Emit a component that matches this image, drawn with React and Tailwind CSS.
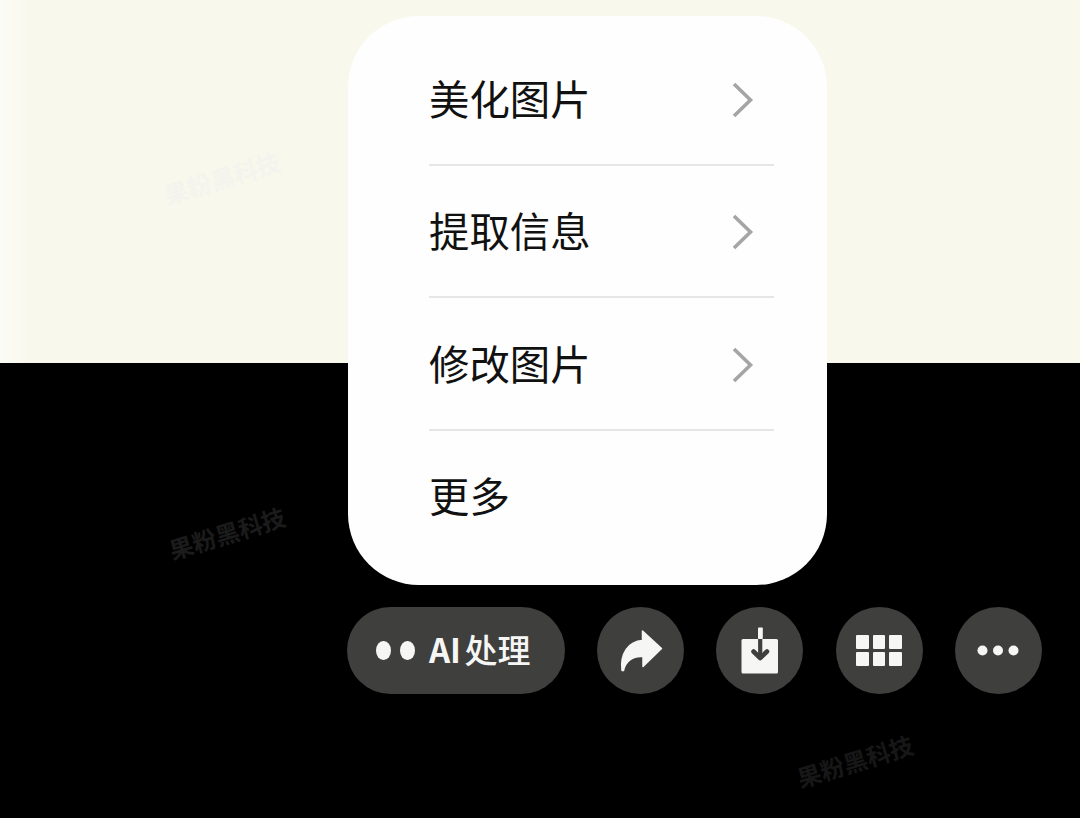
const menuItems = [
  { label: "美化图片", hasSubmenu: true },
  { label: "提取信息", hasSubmenu: true },
  { label: "修改图片", hasSubmenu: true },
  { label: "更多", hasSubmenu: false },
];

function ChevronIcon() {
  return (
    <svg viewBox="0 0 24 38" className="mt-[3px] h-[38px] w-6" fill="none" stroke="#a5a5a5" strokeWidth="3.6" aria-hidden="true">
      <path d="M3 3 L19.5 19 L3 35" />
    </svg>
  );
}

function ShareIcon() {
  return (
    <svg viewBox="0 0 87 87" className="size-full" fill="#f6f6f4" aria-hidden="true">
      <path
        stroke="#f6f6f4"
        strokeWidth="1.5"
        strokeLinejoin="round"
        d="M45.5 24 L64.5 41.5 L46 59.5 V49.5 C36 48.5 28.5 54 26.5 63.5 L25 63.5 C23 46 31.5 34.5 45.5 33.5 Z"
      />
    </svg>
  );
}

function SaveIcon() {
  return (
    <svg viewBox="0 0 87 87" className="size-full" fill="none" aria-hidden="true">
      <rect x="25.5" y="32" width="36.5" height="34.5" rx="1.5" fill="#f6f6f4" />
      <rect x="42" y="20.5" width="4.8" height="11.5" rx="0.8" fill="#f6f6f4" />
      <path d="M44.2 32 V51" stroke="#3f3f3e" strokeWidth="4.2" />
      <path d="M37.5 44.5 L44.2 51 L51 44.5" stroke="#3f3f3e" strokeWidth="4.6" strokeLinecap="round" strokeLinejoin="round" />
    </svg>
  );
}

function GridIcon() {
  return (
    <div className="grid grid-cols-3 gap-x-[4px] gap-y-[3.5px]">
      {[0, 1, 2, 3, 4, 5].map((cell) => (
        <span key={cell} className="h-[13.8px] w-[12.5px] rounded-[1px] bg-[#f6f6f4]" />
      ))}
    </div>
  );
}

function MoreIcon() {
  return (
    <svg viewBox="0 0 87 87" className="size-full" fill="#f6f6f4" aria-hidden="true">
      <circle cx="27.5" cy="43.5" r="5" />
      <circle cx="43" cy="43.5" r="5" />
      <circle cx="58.5" cy="43.5" r="5" />
    </svg>
  );
}

function RoundButton({ label, children }) {
  return (
    <button
      type="button"
      aria-label={label}
      className="flex size-[87px] shrink-0 items-center justify-center rounded-full bg-[#3f3f3e]"
    >
      {children}
    </button>
  );
}

function Watermark({ className }) {
  return (
    <span className={`absolute w-[120px] -rotate-[17deg] text-center text-[24px] leading-8 font-bold whitespace-nowrap ${className}`}>
      果粉黑科技
    </span>
  );
}

function ActionMenu() {
  return (
    <ul className="ml-px flex h-[569px] w-[479px] flex-col rounded-[71px] bg-[#fefefe] pt-[17px] pr-[53px] pl-[81px]">
      {menuItems.map((item) => (
        <li
          key={item.label}
          className="flex h-[132.5px] items-center justify-between border-b-2 border-[#e6e6e6] pr-[19px] last:border-transparent"
        >
          <span className="-mt-px text-[40.4px] leading-none text-[#111111]">{item.label}</span>
          {item.hasSubmenu && <ChevronIcon />}
        </li>
      ))}
    </ul>
  );
}

function Toolbar() {
  return (
    <div className="flex items-center gap-[32.4px]">
      <button
        type="button"
        className="flex h-[87px] w-[217.5px] shrink-0 items-center rounded-full bg-[#3f3f3e] pl-[29px] text-[#f6f6f4]"
      >
        <span className="h-[19px] w-[14.5px] rounded-[50%] bg-[#f6f6f4]" />
        <span className="ml-[9.5px] h-[19px] w-[14.5px] rounded-[50%] bg-[#f6f6f4]" />
        <span className="-mt-0.5 ml-[14px] w-[33px] text-[33px] leading-none font-bold">AI</span>
        <span className="-mt-0.5 ml-[3px] text-[33px] leading-none font-medium">处理</span>
      </button>
      <RoundButton label="分享">
        <ShareIcon />
      </RoundButton>
      <RoundButton label="保存">
        <SaveIcon />
      </RoundButton>
      <RoundButton label="网格">
        <GridIcon />
      </RoundButton>
      <RoundButton label="更多">
        <MoreIcon />
      </RoundButton>
    </div>
  );
}

export default function App() {
  return (
    <main
      lang="zh-CN"
      className="relative h-[818px] w-[1080px] overflow-hidden bg-[linear-gradient(to_bottom,transparent_363px,#000_363px),linear-gradient(to_right,#fcfcf7,#f8f8ec_32px)] pt-4 pl-[347px] font-['Noto_Sans_CJK_SC',sans-serif]"
    >
      <Watermark className="top-[162px] left-[162px] text-[#f4f4ef]" />
      <Watermark className="top-[517px] left-[167px] text-[#1b1b1b]" />
      <Watermark className="top-[745px] left-[795px] text-[#171717]" />
      <div className="relative flex flex-col gap-[22px]">
        <ActionMenu />
        <Toolbar />
      </div>
    </main>
  );
}
